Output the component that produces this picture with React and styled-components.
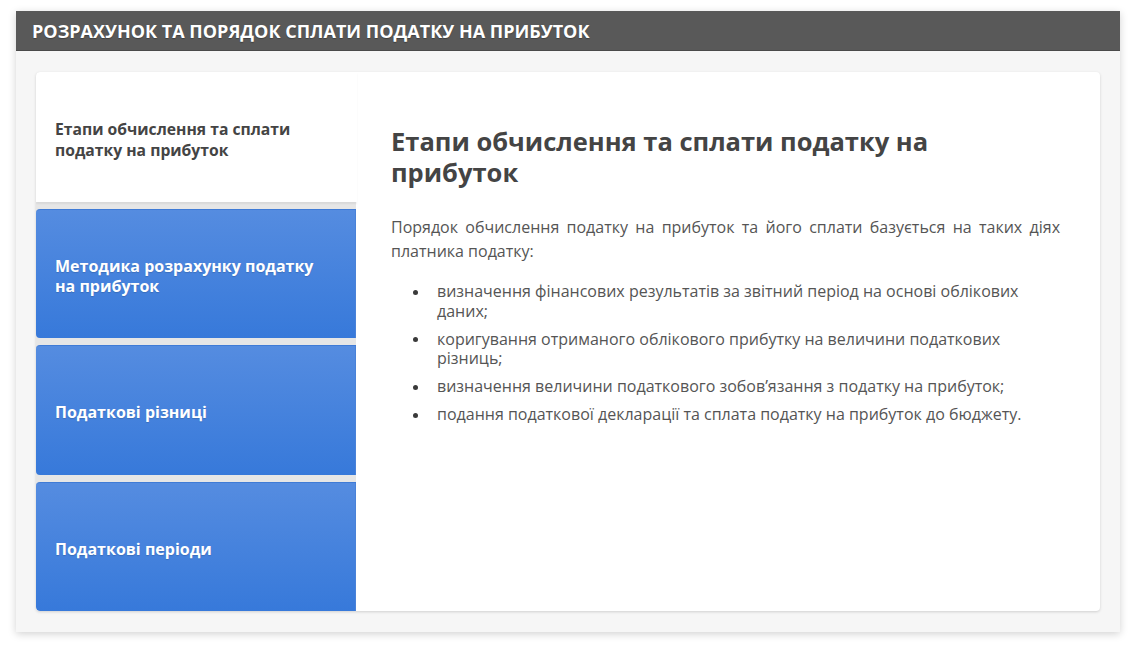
import React, { useState } from "react";
import styled, { createGlobalStyle } from "styled-components";

const GlobalStyle = createGlobalStyle`
  body {
    margin: 0;
    background: #ffffff;
    font-family: "Open Sans", "Liberation Sans", sans-serif;
  }
`;

const Page = styled.div`
  padding: 11px 16px 21px 16px;
`;

const Panel = styled.div`
  width: 1104px;
  height: 621px;
  display: flex;
  flex-direction: column;
  background: #f6f6f6;
  box-shadow: 0 2px 8px rgba(0, 0, 0, 0.18);
`;

const Header = styled.div`
  height: 40px;
  flex-shrink: 0;
  display: flex;
  align-items: center;
  padding-left: 16px;
  background: #595959;
  border-bottom: 1px solid #4a4a4a;
  box-sizing: border-box;
  color: #ffffff;
  font-size: 18px;
  font-weight: 700;
  text-shadow: 0 1px 1px rgba(0, 0, 0, 0.3);
`;

const Body = styled.div`
  flex: 1;
  padding: 21px 20px 21px 20px;
  display: flex;
`;

const Card = styled.div`
  flex: 1;
  display: flex;
  background: #ffffff;
  border-radius: 4px;
  box-shadow: 0 1px 3px rgba(0, 0, 0, 0.16);
  overflow: hidden;
`;

const TabList = styled.div`
  width: 320px;
  flex-shrink: 0;
  display: flex;
  flex-direction: column;
  gap: 7px;
  background: #e6e6e6;
`;

const Tab = styled.button`
  flex: ${({ $active }) => ($active ? "0 0 130px" : "1")};
  display: flex;
  align-items: center;
  border: none;
  margin: 0;
  padding: 0 40px 0 19px;
  text-align: left;
  cursor: pointer;
  font-family: inherit;
  font-size: 16px;
  line-height: 21px;
  border-radius: 4px 0 0 4px;
  ${({ $active }) =>
    $active
      ? `
    background: #ffffff;
    color: #444444;
    font-size: 15.7px;
    font-weight: 700;
    padding-top: 5px;
    margin-right: -1px;
    border-radius: 4px 0 0 0;
    box-shadow: 0 2px 2px rgba(0, 0, 0, 0.06);
  `
      : `
    background: linear-gradient(to bottom, #558ce0, #3779da);
    color: #ffffff;
    font-weight: 700;
    line-height: 20px;
    padding-top: 4px;
    border-top: 1px solid #3f7bd6;
    text-shadow: 0 1px 1px rgba(0, 0, 0, 0.15);
    box-shadow: inset -1px 0 0 #4a82d8;
  `}
`;

const Content = styled.div`
  flex: 1;
  padding: 54px 40px 0 35px;
  color: #555555;
`;

const Title = styled.h2`
  margin: 0;
  font-size: 25.5px;
  line-height: 31px;
  font-weight: 700;
  color: #444444;
`;

const Text = styled.p`
  margin: 27px 0 0 0;
  font-size: 16px;
  line-height: 24px;
  text-align: justify;
`;

const List = styled.ul`
  margin: 19px 0 0 0;
  padding-left: 46px;
  list-style: none;
`;

const Item = styled.li`
  position: relative;
  font-size: 16px;
  line-height: 19.5px;
  margin-bottom: 8.5px;

  &::before {
    content: "";
    position: absolute;
    left: -24px;
    top: 7.5px;
    width: 5px;
    height: 5px;
    border-radius: 50%;
    background: #3a3a3a;
  }
`;

const tabs = [
  "Етапи обчислення та сплати податку на прибуток",
  "Методика розрахунку податку на прибуток",
  "Податкові різниці",
  "Податкові періоди",
];

const App = () => {
  const [active, setActive] = useState(0);

  return (
    <>
      <GlobalStyle />
      <Page>
        <Panel>
          <Header>РОЗРАХУНОК ТА ПОРЯДОК СПЛАТИ ПОДАТКУ НА ПРИБУТОК</Header>
          <Body>
            <Card>
              <TabList>
                {tabs.map((t, i) => (
                  <Tab key={t} $active={i === active} onClick={() => setActive(i)}>
                    {t}
                  </Tab>
                ))}
              </TabList>
              <Content>
                <Title>Етапи обчислення та сплати податку на прибуток</Title>
                <Text>
                  Порядок обчислення податку на прибуток та його сплати базується
                  на таких діях платника податку:
                </Text>
                <List>
                  <Item>
                    визначення фінансових результатів за звітний період на основі
                    облікових даних;
                  </Item>
                  <Item>
                    коригування отриманого облікового прибутку на величини
                    податкових різниць;
                  </Item>
                  <Item>
                    визначення величини податкового зобов’язання з податку на
                    прибуток;
                  </Item>
                  <Item>
                    подання податкової декларації та сплата податку на прибуток до
                    бюджету.
                  </Item>
                </List>
              </Content>
            </Card>
          </Body>
        </Panel>
      </Page>
    </>
  );
};

export default App;
